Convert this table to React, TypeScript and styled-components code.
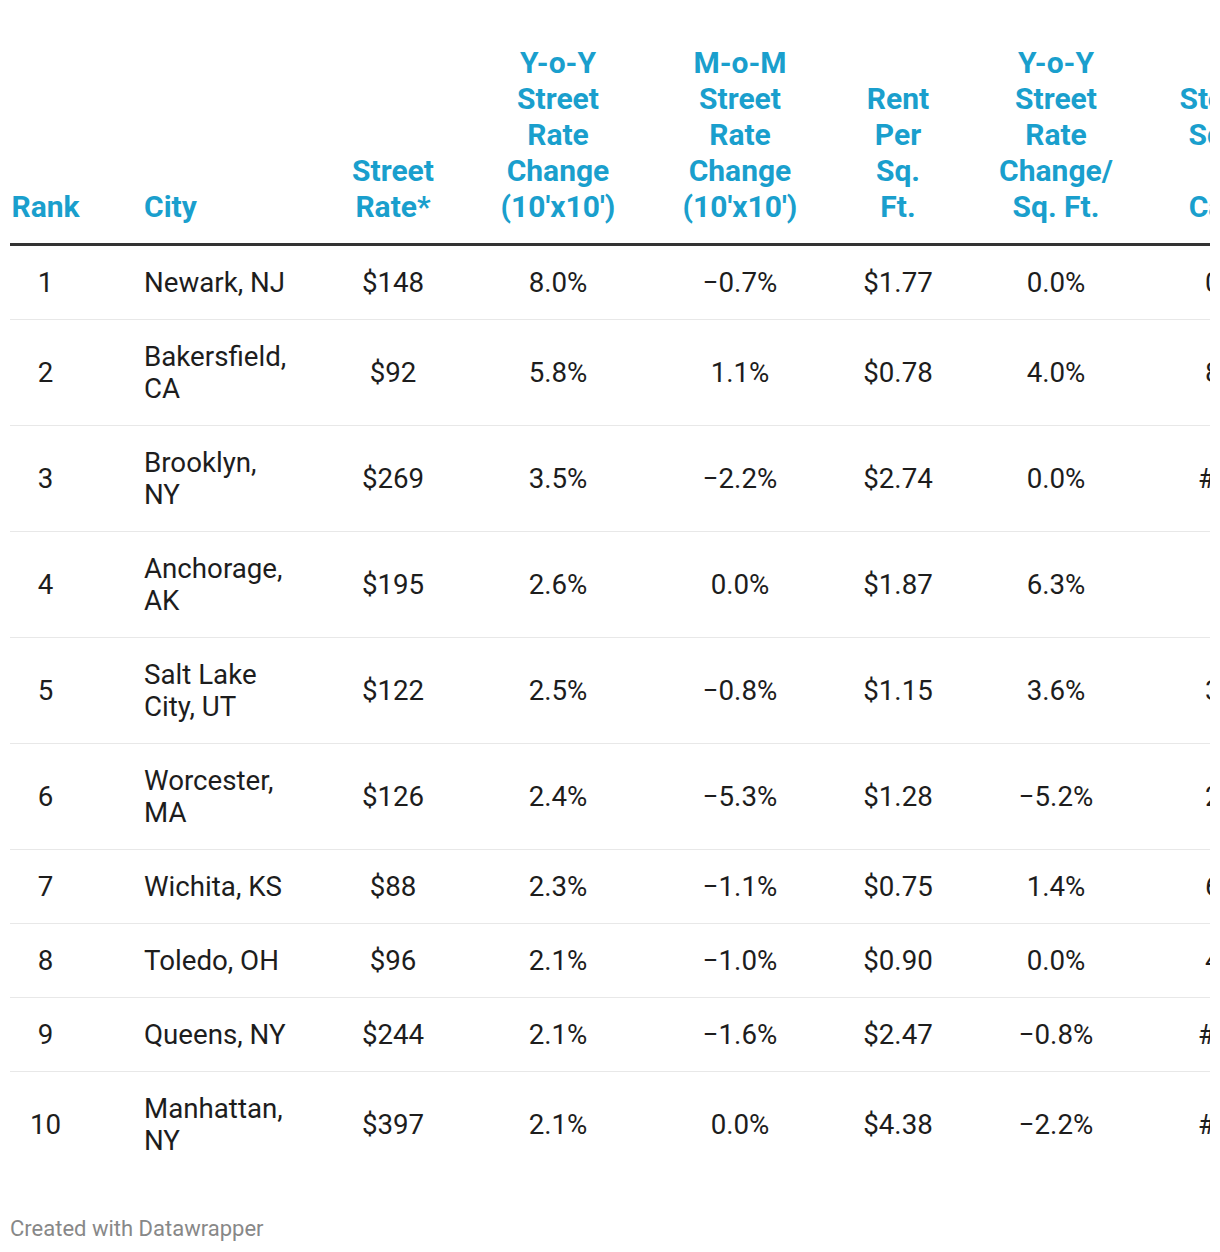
import React from "react";
import styled, { createGlobalStyle } from "styled-components";

const GlobalStyle = createGlobalStyle`
  html, body {
    margin: 0;
    padding: 0;
    background: #ffffff;
  }
  body {
    font-family: Roboto, "Liberation Sans", Arial, sans-serif;
    color: #1d1d1d;
  }
`;

const Page = styled.div`
  padding: 45px 10px 0;
  width: 1200px;
`;

const Scroller = styled.div`
  width: 1200px;
  overflow: hidden;
`;

const Table = styled.table`
  border-collapse: collapse;
  table-layout: fixed;
  width: 1288px;
`;

const Col = styled.col<{ $w: number }>`
  width: ${(p) => p.$w}px;
`;

type Align = "left" | "center";

const HeadCell = styled.th<{ $align: Align; $padLeft?: number }>`
  padding: 0 0 18px ${(p) => p.$padLeft ?? 0}px;
  vertical-align: bottom;
  text-align: ${(p) => p.$align};
  font-weight: 700;
  font-size: 30px;
  line-height: 36px;
  color: #1a9fcd;
  border-bottom: 3px solid #333333;
  white-space: nowrap;
`;

const BodyRow = styled.tr<{ $last: boolean }>`
  border-bottom: ${(p) => (p.$last ? "none" : "1px solid #e8e8e8")};
`;

const Cell = styled.td<{ $align: Align; $padLeft?: number; $padRight?: number }>`
  padding: 21px ${(p) => p.$padRight ?? 0}px 20px ${(p) => p.$padLeft ?? 0}px;
  text-align: ${(p) => p.$align};
  vertical-align: middle;
  font-size: 27.7px;
  line-height: 32px;
  color: #1d1d1d;
  white-space: ${(p) => (p.$align === "left" ? "normal" : "nowrap")};
`;

const Footer = styled.div`
  margin-top: 39px;
  font-size: 22px;
  line-height: 26px;
  color: #888888;
`;

type Column = {
  key: string;
  width: number;
  align: Align;
  lines: string[];
  padLeft?: number;
  padRight?: number;
};

const columns: Column[] = [
  { key: "rank", width: 71, align: "center", lines: ["Rank"] },
  { key: "city", width: 219, align: "left", lines: ["City"], padLeft: 63, padRight: 7 },
  { key: "rate", width: 186, align: "center", lines: ["Street", "Rate*"] },
  { key: "yoy", width: 144, align: "center", lines: ["Y-o-Y", "Street", "Rate", "Change", "(10'x10')"] },
  { key: "mom", width: 220, align: "center", lines: ["M-o-M", "Street", "Rate", "Change", "(10'x10')"] },
  { key: "rent", width: 96, align: "center", lines: ["Rent", "Per", "Sq.", "Ft."] },
  { key: "yoysq", width: 220, align: "center", lines: ["Y-o-Y", "Street", "Rate", "Change/", "Sq. Ft."] },
  { key: "cap", width: 132, align: "center", lines: ["Storage", "Sq. Ft.", "per", "Capita"] },
];

const rows: string[][] = [
  ["1", "Newark, NJ", "$148", "8.0%", "\u22120.7%", "$1.77", "0.0%", "0.84"],
  ["2", "Bakersfield, CA", "$92", "5.8%", "1.1%", "$0.78", "4.0%", "8.36"],
  ["3", "Brooklyn, NY", "$269", "3.5%", "\u22122.2%", "$2.74", "0.0%", "####"],
  ["4", "Anchorage, AK", "$195", "2.6%", "0.0%", "$1.87", "6.3%", ""],
  ["5", "Salt Lake City, UT", "$122", "2.5%", "\u22120.8%", "$1.15", "3.6%", "3.52"],
  ["6", "Worcester, MA", "$126", "2.4%", "\u22125.3%", "$1.28", "\u22125.2%", "2.97"],
  ["7", "Wichita, KS", "$88", "2.3%", "\u22121.1%", "$0.75", "1.4%", "6.41"],
  ["8", "Toledo, OH", "$96", "2.1%", "\u22121.0%", "$0.90", "0.0%", "4.75"],
  ["9", "Queens, NY", "$244", "2.1%", "\u22121.6%", "$2.47", "\u22120.8%", "####"],
  ["10", "Manhattan, NY", "$397", "2.1%", "0.0%", "$4.38", "\u22122.2%", "####"],
];

export default function App() {
  return (
    <>
      <GlobalStyle />
      <Page>
        <Scroller>
          <Table>
            <colgroup>
              {columns.map((c) => (
                <Col key={c.key} $w={c.width} />
              ))}
            </colgroup>
            <thead>
              <tr>
                {columns.map((c) => (
                  <HeadCell key={c.key} $align={c.align} $padLeft={c.padLeft}>
                    {c.lines.map((l, i) => (
                      <React.Fragment key={i}>
                        {i > 0 && <br />}
                        {l}
                      </React.Fragment>
                    ))}
                  </HeadCell>
                ))}
              </tr>
            </thead>
            <tbody>
              {rows.map((r, ri) => (
                <BodyRow key={ri} $last={ri === rows.length - 1}>
                  {r.map((v, ci) => (
                    <Cell
                      key={ci}
                      $align={columns[ci].align}
                      $padLeft={columns[ci].padLeft}
                      $padRight={columns[ci].padRight}
                    >
                      {v}
                    </Cell>
                  ))}
                </BodyRow>
              ))}
            </tbody>
          </Table>
        </Scroller>
        <Footer>Created with Datawrapper</Footer>
      </Page>
    </>
  );
}
